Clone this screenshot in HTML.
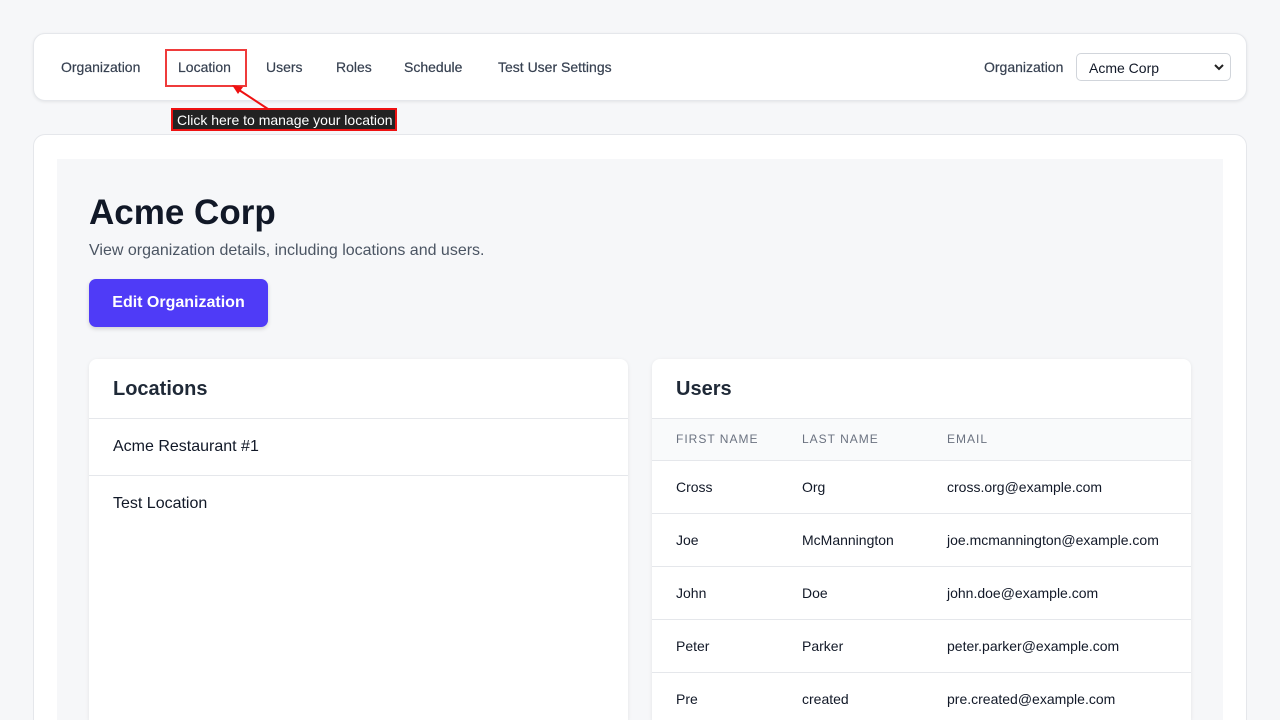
<!DOCTYPE html>
<html style="width:1280px;height:720px;overflow:hidden"><head><style>
*{box-sizing:border-box;margin:0;padding:0}
body{width:1280px;height:720px;overflow:hidden;background:#f6f7f9;font-family:"Liberation Sans",sans-serif;color:#111827;position:relative}
.nav{position:absolute;left:33px;top:33px;width:1214px;height:68px;background:#fff;border:1px solid #e5e7eb;border-radius:12px;box-shadow:0 1px 3px rgba(0,0,0,.08)}
.nav a{position:absolute;top:25px;font-size:14px;color:#374151;text-decoration:none;-webkit-text-stroke:0.2px #374151}
.hl{position:absolute;left:131px;top:15px;width:82px;height:38px;border:2px solid #ef3b3b}
.sel{position:absolute;left:1042px;top:19px;width:155px;height:28px;border:1px solid #d1d5db;border-radius:5px;font-size:14px;padding:6px 12px;color:#111827}
.tip{position:absolute;left:171px;top:108px;width:226px;height:23px;background:#222;border:2px solid #e11;color:#fff;font-size:14px;padding:2px 0 0 4px}
.main{position:absolute;left:33px;top:134px;width:1214px;height:586px;overflow:hidden;background:#fff;border:1px solid #e5e7eb;border-bottom:0;border-radius:12px 12px 0 0}
.inner{position:absolute;left:23px;top:24px;width:1166px;height:562px;overflow:hidden;background:#f6f7f9}
h1{position:absolute;left:32px;top:34px;font-size:35px;font-weight:bold}
.sub{position:absolute;left:32px;top:83px;font-size:16px;color:#4b5563}
.btn{position:absolute;left:32px;top:120px;width:179px;height:48px;background:#4f3bf7;border-radius:7px;color:#fff;font-weight:bold;font-size:16px;text-align:center;line-height:48px;box-shadow:0 2px 4px rgba(0,0,0,.15)}
.card{position:absolute;top:200px;width:539px;height:362px;overflow:hidden;background:#fff;border-radius:8px 8px 0 0;box-shadow:0 1px 4px rgba(0,0,0,.08)}
.card h2{font-size:20px;font-weight:bold;height:60px;padding:19px 24px;border-bottom:1px solid #e5e7eb;color:#1f2937}
.li{height:57px;border-bottom:1px solid #e5e7eb;padding:19px 24px;font-size:16px}
table{border-collapse:collapse;width:100%;font-size:14px;table-layout:fixed}
th{background:#f9fafb;height:41px;text-align:left;font-size:12px;color:#6b7280;font-weight:normal;letter-spacing:1px;border-bottom:1px solid #e5e7eb}
td{height:53px;border-bottom:1px solid #e5e7eb}
th:first-child,td:first-child{padding-left:24px;width:150px}
th:nth-child(2),td:nth-child(2){width:145px}
</style></head><body>
<div class="nav">
<a style="left:27px">Organization</a><a style="left:144px">Location</a><a style="left:232px">Users</a><a style="left:302px">Roles</a><a style="left:370px">Schedule</a><a style="left:464px">Test User Settings</a>
<div class="hl"></div>
<a style="left:950px">Organization</a>
<div class="sel">Acme Corp<svg style="position:absolute;right:6px;top:9px" width="10" height="8" viewBox="0 0 10 8"><path d="M1 2l4 4 4-4" stroke="#222" stroke-width="2" fill="none"/></svg></div>
</div>
<svg style="position:absolute;left:228px;top:82px" width="45" height="30"><path d="M40 27L8 6" stroke="#e11" stroke-width="2"/><path d="M4 3l11 2-5 7z" fill="#e11"/></svg>
<div class="tip">Click here to manage your location</div>
<div class="main"><div class="inner">
<h1>Acme Corp</h1>
<div class="sub">View organization details, including locations and users.</div>
<div class="btn">Edit Organization</div>
<div class="card" style="left:32px"><h2>Locations</h2><div class="li">Acme Restaurant #1</div><div class="li" style="border:0">Test Location</div></div>
<div class="card" style="left:595px"><h2>Users</h2>
<table><tr><th>FIRST NAME</th><th>LAST NAME</th><th>EMAIL</th></tr>
<tr><td>Cross</td><td>Org</td><td>cross.org@example.com</td></tr>
<tr><td>Joe</td><td>McMannington</td><td>joe.mcmannington@example.com</td></tr>
<tr><td>John</td><td>Doe</td><td>john.doe@example.com</td></tr>
<tr><td>Peter</td><td>Parker</td><td>peter.parker@example.com</td></tr>
<tr><td>Pre</td><td>created</td><td>pre.created@example.com</td></tr></table></div>
</div></div>
</body></html>
